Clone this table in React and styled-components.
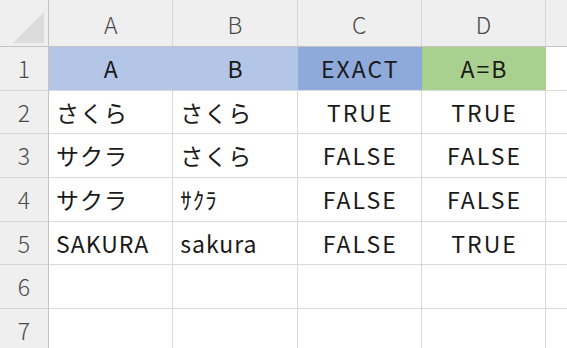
import React from "react";
import styled, { createGlobalStyle } from "styled-components";

const Global = createGlobalStyle`
  html, body { margin: 0; padding: 0; background: #ffffff; }
  body { font-family: "Noto Sans CJK JP", "Noto Sans", sans-serif; overflow: hidden; }
`;

const COL_W = 124.3;
const ROW_H = 43.7;

const Sheet = styled.div`
  display: grid;
  grid-template-columns: 48px 1px repeat(5, ${COL_W}px);
  grid-template-rows: 46px 1px repeat(7, ${ROW_H}px);
  width: 567px;
  height: 348px;
  overflow: hidden;
  background: #ffffff;
`;

const Corner = styled.div`
  grid-column: 1;
  grid-row: 1;
  background: #efefef;
  position: relative;
  &::after {
    content: "";
    position: absolute;
    right: 4px;
    bottom: 3px;
    width: 31px;
    height: 31px;
    background: #dcdcdc;
    clip-path: polygon(100% 0, 100% 100%, 0 100%);
  }
`;

const HeaderRule = styled.div`
  grid-column: 1 / -1;
  grid-row: 2;
  background: #c4c4c4;
`;

const SideRule = styled.div`
  grid-column: 2;
  grid-row: 1 / -1;
  background: #c4c4c4;
`;

const ColHead = styled.div`
  grid-row: 1;
  background: #efefef;
  border-right: 1px solid #d6d6d6;
  display: flex;
  align-items: center;
  justify-content: center;
  padding-top: 3px;
  font-size: 23px;
  font-weight: 300;
  line-height: 1;
  color: #4a4a4a;
`;

const RowHead = styled.div`
  grid-column: 1;
  background: #efefef;
  border-bottom: 1px solid #d6d6d6;
  display: flex;
  align-items: center;
  justify-content: center;
  font-size: 23px;
  font-weight: 300;
  line-height: 1;
  color: #4a4a4a;
`;

const Cell = styled.div`
  background: ${(p) => p.$fill || "#ffffff"};
  border-right: 1px solid ${(p) => (p.$fill ? p.$fill : "#dadada")};
  border-bottom: 1px solid #dadada;
  display: flex;
  align-items: center;
  justify-content: ${(p) => (p.$center ? "center" : "flex-start")};
  padding-left: ${(p) => (p.$center ? "2px" : "7px")};
  font-size: 23px;
  line-height: 1;
  letter-spacing: ${(p) => (p.$center ? "2px" : "1px")};
  color: #1a1a1a;
  white-space: nowrap;
  overflow: hidden;
`;

const cols = ["A", "B", "C", "D", ""];

const rows = [
  [
    { t: "A", fill: "#b4c6e7", center: true },
    { t: "B", fill: "#b4c6e7", center: true },
    { t: "EXACT", fill: "#8eaadb", center: true },
    { t: "A=B", fill: "#a9d08e", center: true },
    { t: "" },
  ],
  [{ t: "さくら" }, { t: "さくら" }, { t: "TRUE", center: true }, { t: "TRUE", center: true }, { t: "" }],
  [{ t: "サクラ" }, { t: "さくら" }, { t: "FALSE", center: true }, { t: "FALSE", center: true }, { t: "" }],
  [{ t: "サクラ" }, { t: "ｻｸﾗ" }, { t: "FALSE", center: true }, { t: "FALSE", center: true }, { t: "" }],
  [{ t: "SAKURA" }, { t: "sakura" }, { t: "FALSE", center: true }, { t: "TRUE", center: true }, { t: "" }],
  [{ t: "" }, { t: "" }, { t: "" }, { t: "" }, { t: "" }],
  [{ t: "" }, { t: "" }, { t: "" }, { t: "" }, { t: "" }],
];

export default function App() {
  return (
    <>
      <Global />
      <Sheet>
        <Corner />
        {cols.map((c, i) => (
          <ColHead key={i} style={{ gridColumn: i + 3 }}>{c}</ColHead>
        ))}
        <HeaderRule />
        <SideRule />
        {rows.map((r, ri) => (
          <React.Fragment key={ri}>
            <RowHead style={{ gridRow: ri + 3 }}>{ri + 1}</RowHead>
            {r.map((c, ci) => (
              <Cell
                key={ci}
                style={{ gridRow: ri + 3, gridColumn: ci + 3 }}
                $fill={c.fill}
                $center={c.center}
              >
                {c.t}
              </Cell>
            ))}
          </React.Fragment>
        ))}
      </Sheet>
    </>
  );
}
